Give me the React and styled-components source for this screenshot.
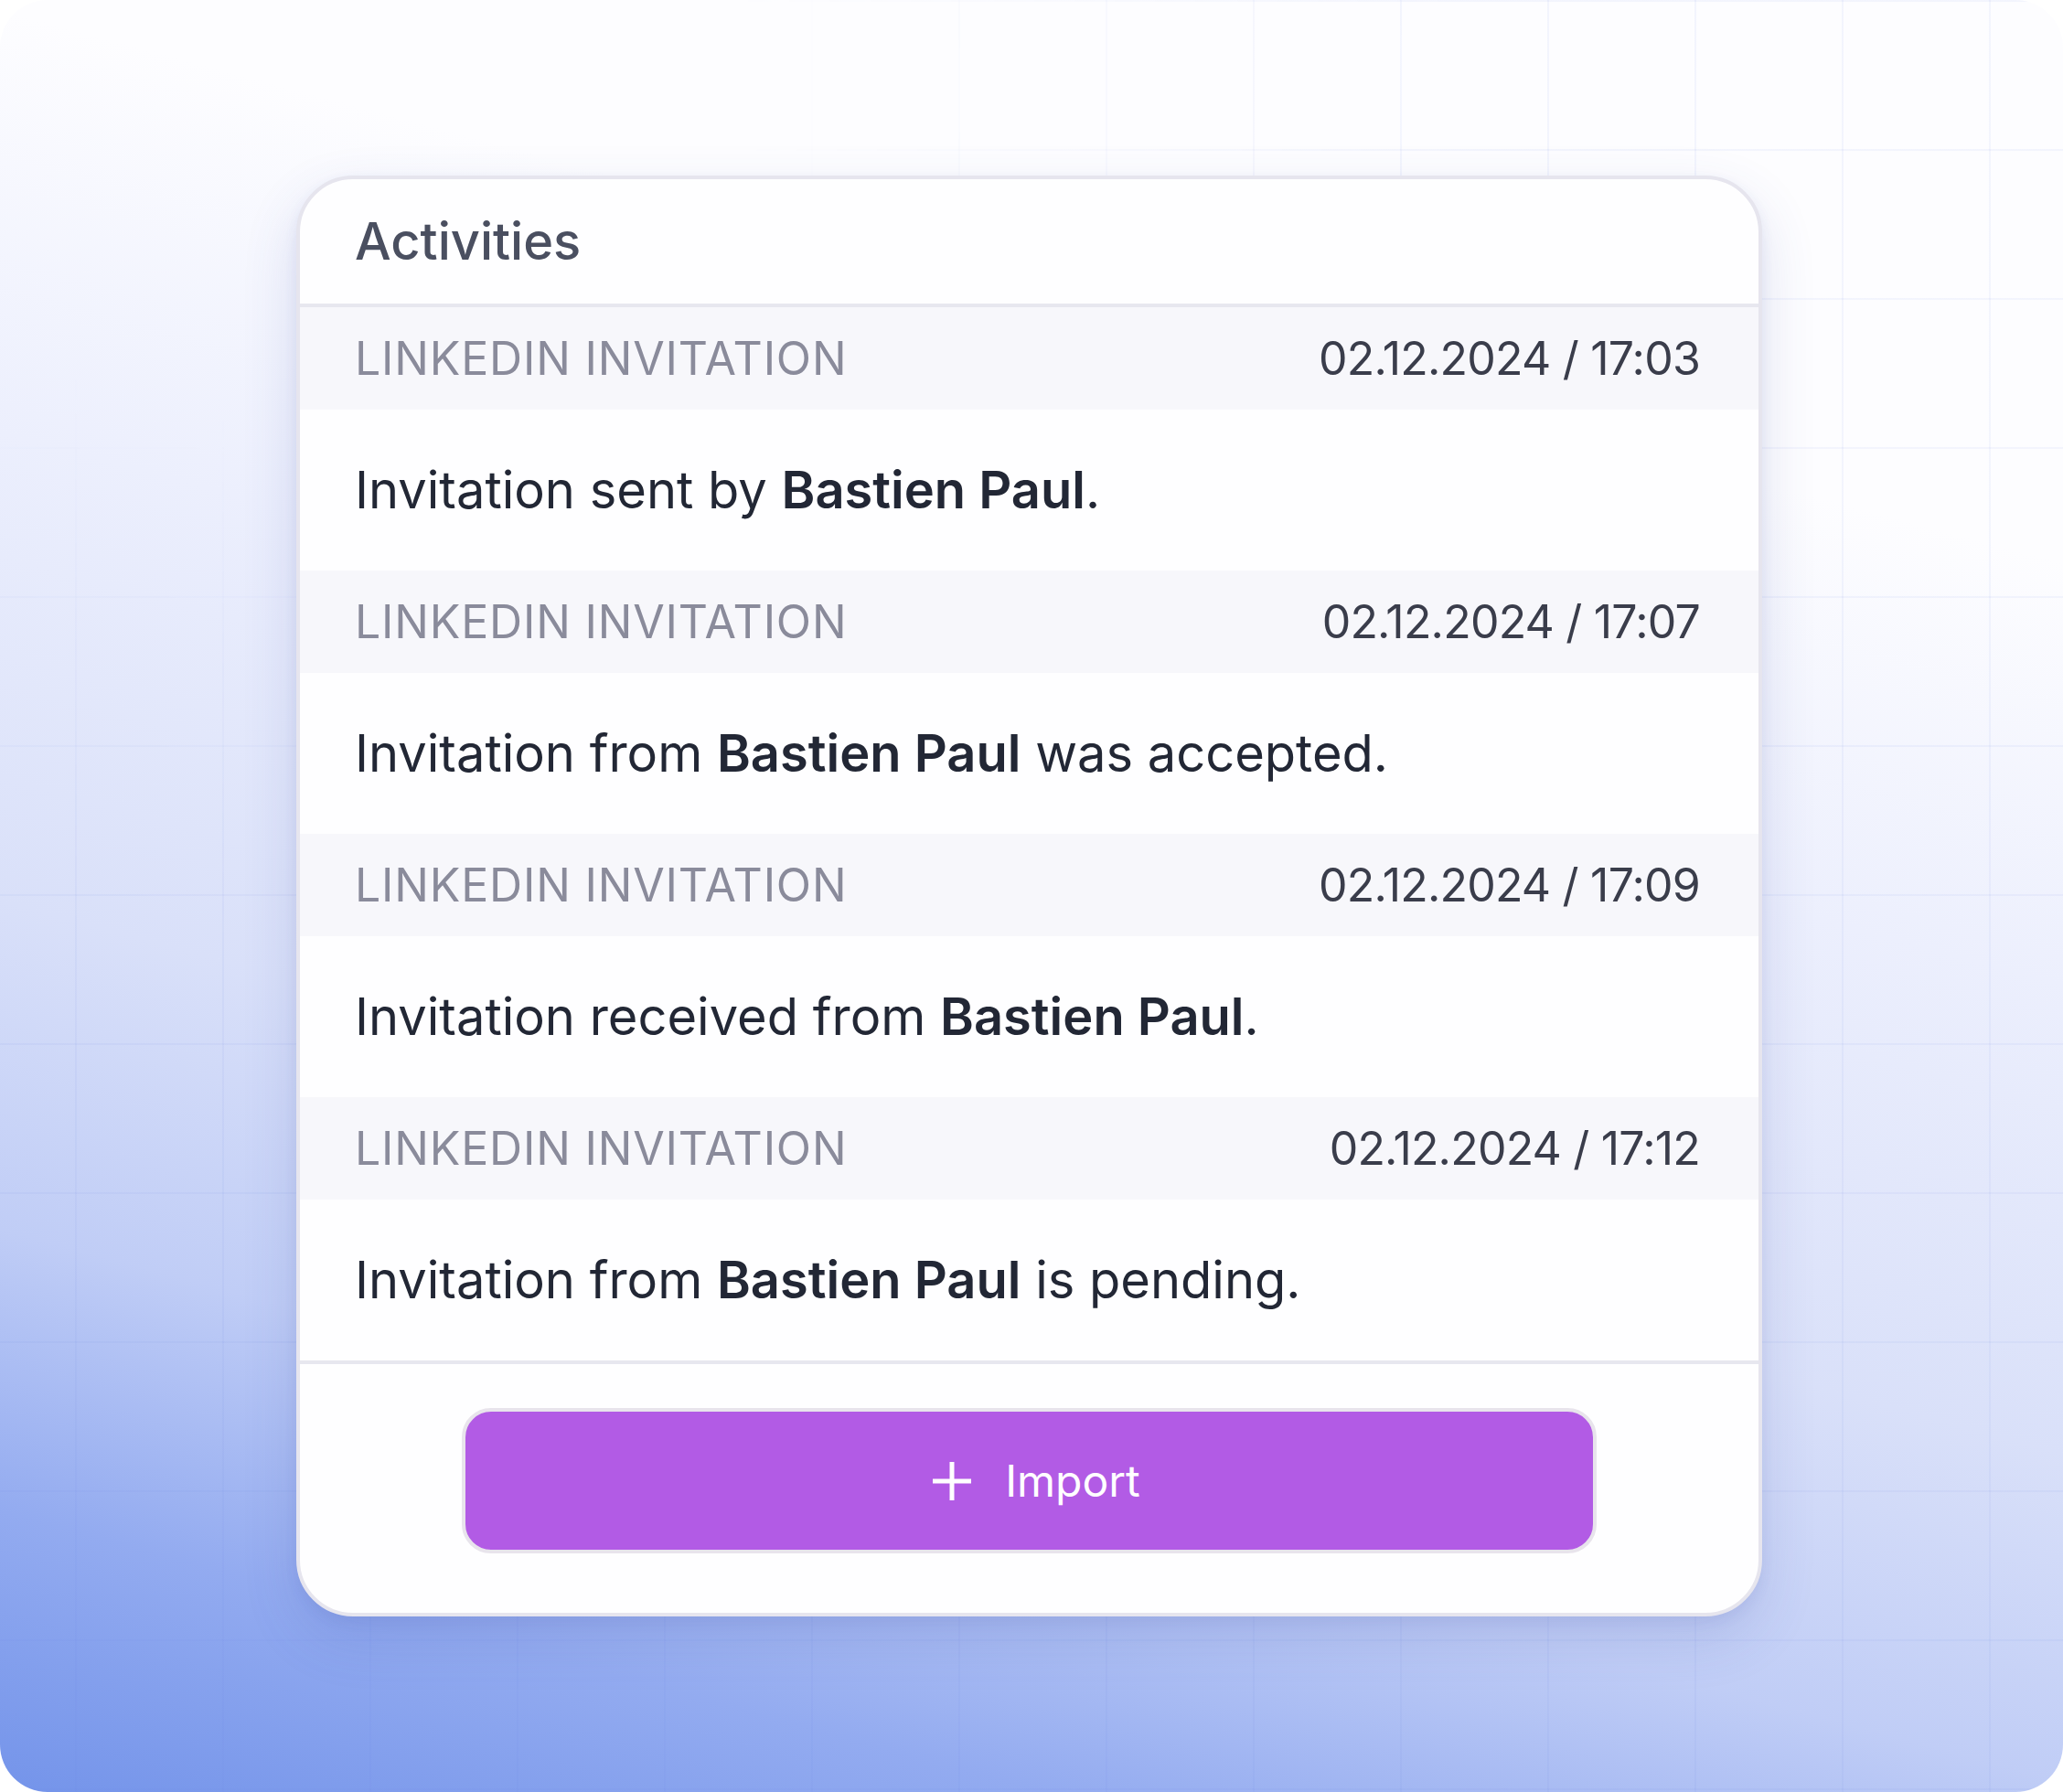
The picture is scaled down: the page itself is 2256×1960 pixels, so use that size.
import styled, { createGlobalStyle } from "styled-components";

const GlobalStyle = createGlobalStyle`
  html, body {
    margin: 0;
    padding: 0;
    background: #ffffff;
  }
  body {
    font-family: Inter, "Noto Sans", "Liberation Sans", sans-serif;
    -webkit-font-smoothing: antialiased;
  }
  * {
    box-sizing: border-box;
  }
`;

const Frame = styled.div`
  position: relative;
  width: 2256px;
  height: 1960px;
  border-radius: 52px;
  overflow: hidden;
  padding: 192px 0 0 324px;
  background: linear-gradient(
    15deg,
    #7494ea 0%,
    #93abf0 12%,
    #c0cdf6 24%,
    #d9e0f9 38%,
    #eceffd 58%,
    #fdfdff 76%
  );

  /* faint grid behind the card */
  &::before {
    content: "";
    position: absolute;
    inset: 0;
    background-image: linear-gradient(
        to right,
        rgba(110, 135, 230, 0.07) 2px,
        transparent 2px
      ),
      linear-gradient(to bottom, rgba(110, 135, 230, 0.07) 2px, transparent 2px);
    background-size: 161px 163px;
    background-position: 82px 0;
    -webkit-mask-image: radial-gradient(
      ellipse 70% 60% at 15% 5%,
      transparent 30%,
      #000 80%
    );
    mask-image: radial-gradient(
      ellipse 70% 60% at 15% 5%,
      transparent 30%,
      #000 80%
    );
    pointer-events: none;
  }
`;

const Card = styled.section`
  position: relative;
  z-index: 1;
  width: 1603px;
  display: flex;
  flex-direction: column;
  background: #fefeff;
  border: 4px solid #e6e5ee;
  border-radius: 62px;
  overflow: hidden;
  box-shadow: 0 24px 60px rgba(60, 80, 170, 0.16),
    0 6px 14px rgba(60, 80, 170, 0.08);
`;

const Header = styled.header`
  height: 140px;
  display: flex;
  align-items: center;
  padding: 0 60px;
  border-bottom: 4px solid #e7e7ef;
  font-size: 56px;
  font-weight: 500;
  color: #4a4f60;
  line-height: 1;
`;

const MetaRow = styled.div`
  height: 112px;
  display: flex;
  align-items: center;
  justify-content: space-between;
  padding: 0 64px 0 60px;
  background: #f7f7fb;
  font-size: 50px;
  line-height: 1;
`;

const Kind = styled.span`
  color: #8a8b9b;
  font-weight: 400;
  letter-spacing: 0.8px;
  text-transform: uppercase;
`;

const Stamp = styled.span`
  color: #3a3d4b;
  font-weight: 400;
  letter-spacing: -0.8px;
`;

const BodyRow = styled.div`
  height: 176px;
  display: flex;
  align-items: center;
  padding: 0 60px;
`;

const Message = styled.p`
  margin: 0;
  font-size: 56px;
  line-height: 1;
  color: #222735;

  b {
    font-weight: 600;
  }
`;

const Footer = styled.footer`
  border-top: 4px solid #e7e7ef;
  padding: 48px 177px 65px;
`;

const ImportButton = styled.button`
  width: 100%;
  height: 159px;
  display: flex;
  align-items: center;
  justify-content: center;
  gap: 37px;
  padding: 0 0 0 16px;
  background: #b25be5;
  border: 4px solid #e8e4ec;
  border-radius: 32px;
  color: #ffffff;
  font-family: inherit;
  font-size: 48px;
  font-weight: 400;
  cursor: pointer;
`;

const PlusIcon = () => (
  <svg width="42" height="42" viewBox="0 0 42 42" fill="none">
    <path d="M21 0v42M0 21h42" stroke="#ffffff" strokeWidth="5" />
  </svg>
);

const activities = [
  {
    time: "02.12.2024 / 17:03",
    text: (
      <>
        Invitation sent by <b>Bastien Paul</b>.
      </>
    ),
  },
  {
    time: "02.12.2024 / 17:07",
    text: (
      <>
        Invitation from <b>Bastien Paul</b> was accepted.
      </>
    ),
  },
  {
    time: "02.12.2024 / 17:09",
    text: (
      <>
        Invitation received from <b>Bastien Paul</b>.
      </>
    ),
  },
  {
    time: "02.12.2024 / 17:12",
    text: (
      <>
        Invitation from <b>Bastien Paul</b> is pending.
      </>
    ),
  },
];

function App() {
  return (
    <>
      <GlobalStyle />
      <Frame>
        <Card>
          <Header>Activities</Header>
          {activities.map((item) => (
            <div key={item.time}>
              <MetaRow>
                <Kind>LinkedIn invitation</Kind>
                <Stamp>{item.time}</Stamp>
              </MetaRow>
              <BodyRow>
                <Message>{item.text}</Message>
              </BodyRow>
            </div>
          ))}
          <Footer>
            <ImportButton type="button">
              <PlusIcon />
              Import
            </ImportButton>
          </Footer>
        </Card>
      </Frame>
    </>
  );
}

export default App;
